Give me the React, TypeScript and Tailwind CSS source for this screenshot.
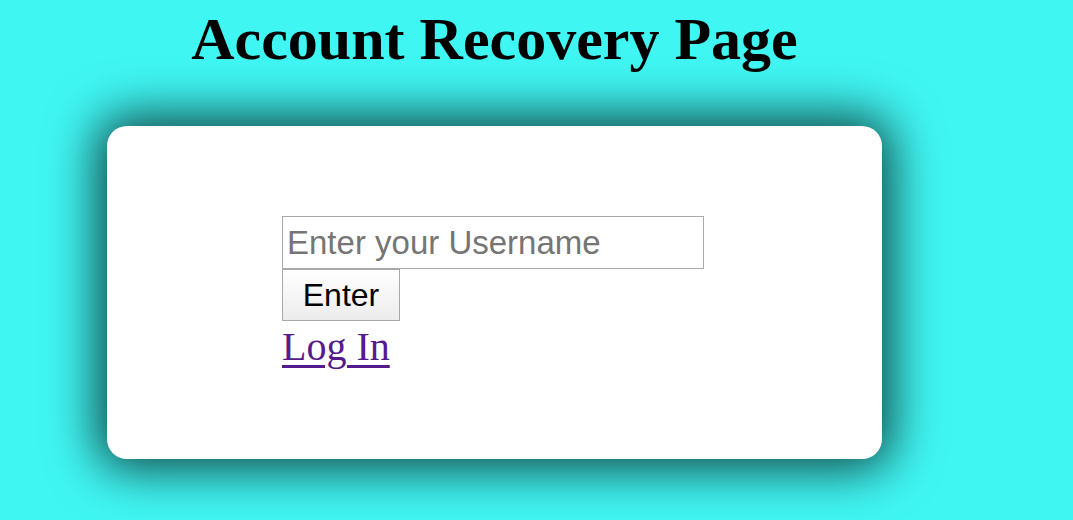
export default function App() {
  return (
    <div className="min-h-[520px] w-full overflow-hidden bg-[#40f6f3] font-['Liberation_Serif','Times_New_Roman',serif]">
      <div className="ml-[107px] w-[775px]">
        <h1 className="pt-[5px] text-center text-[60px] leading-[69px] font-bold text-black">
          Account Recovery Page
        </h1>
        <div className="mt-[52px] h-[333px] rounded-[20px] bg-white pl-[175px] pt-[90px] shadow-[0_0_50px_10px_rgba(0,0,0,0.72)]">
          <div className="flex flex-col items-start font-['Liberation_Sans',Arial,sans-serif]">
            <input
              type="text"
              placeholder="Enter your Username"
              className="box-border block h-[53px] w-[422px] border border-[#a9a9a9] bg-white px-[4px] text-[33px] leading-[38px] text-black outline-none placeholder:text-[#757575]"
            />
            <button className="box-border block h-[52px] w-[118px] border border-[#a9a9a9] bg-gradient-to-b from-white to-[#ececec] text-[32px] leading-[37px] text-black">
              Enter
            </button>
            <a
              href="#"
              className="mt-[3px] block font-['Liberation_Serif','Times_New_Roman',serif] text-[40px] leading-[46px] text-[#551a8b] underline decoration-[3px] underline-offset-[5px]"
            >
              Log In
            </a>
          </div>
        </div>
      </div>
    </div>
  );
}
